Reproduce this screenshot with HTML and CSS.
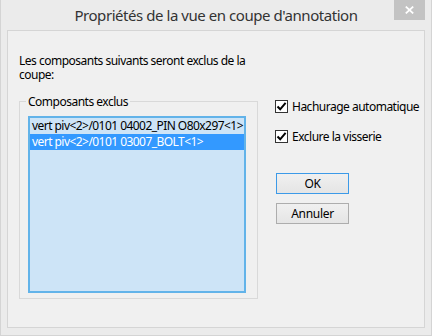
FILE: index.html
```html
<!DOCTYPE html>
<html lang="fr">
<head>
<meta charset="utf-8">
<link rel="stylesheet" href="styles.css">
</head>
<body>
<div class="window">
  <div class="titlebar">
    <div class="title">Propriétés de la vue en coupe d'annotation</div>
    <div class="close">
      <svg width="9" height="8" viewBox="0 0 9 8"><path d="M0.8 0.6 L8.2 7.4 M8.2 0.6 L0.8 7.4" stroke="#fff" stroke-width="1.8"/></svg>
    </div>
  </div>
  <div class="client">
    <p class="intro">Les composants suivants seront exclus de la<br>coupe:</p>
    <div class="main">
      <fieldset class="group">
        <legend>Composants exclus</legend>
        <div class="listbox">
          <div class="item">vert piv&lt;2&gt;/0101 04002_PIN O80x297&lt;1&gt;</div>
          <div class="item selected">vert piv&lt;2&gt;/0101 03007_BOLT&lt;1&gt;</div>
        </div>
      </fieldset>
      <div class="side">
        <label class="check first">
          <span class="box"><svg width="11" height="11" viewBox="0 0 11 11"><path d="M1.5 5.5 L4.2 8.3 L9.6 1.8" fill="none" stroke="#000" stroke-width="2"/></svg></span>
          <span>Hachurage automatique</span>
        </label>
        <label class="check second">
          <span class="box"><svg width="11" height="11" viewBox="0 0 11 11"><path d="M1.5 5.5 L4.2 8.3 L9.6 1.8" fill="none" stroke="#000" stroke-width="2"/></svg></span>
          <span>Exclure la visserie</span>
        </label>
        <button class="btn ok">OK</button>
        <button class="btn cancel">Annuler</button>
      </div>
    </div>
  </div>
</div>
</body>
</html>
```

FILE: styles.css
```css
* { box-sizing: border-box; }
html, body { margin: 0; padding: 0; }
body {
  width: 432px;
  height: 336px;
  font-family: "Noto Sans", "Open Sans", sans-serif;
  font-size: 12px;
  letter-spacing: -0.5px;
  color: #000;
  background: #ebebeb;
}
.window {
  width: 432px;
  height: 336px;
  display: flex;
  flex-direction: column;
  background: #ebebeb;
  border-left: 1px solid #d4d4d4;
  border-right: 1px solid #d4d4d4;
  border-bottom: 1px solid #d4d4d4;
}
.titlebar {
  position: relative;
  height: 30px;
  flex: none;
}
.title {
  text-align: center;
  font-size: 15px;
  line-height: 20px;
  padding-top: 5px;
  color: #333;
  letter-spacing: -0.45px;
}
.close {
  position: absolute;
  top: 0;
  right: 6px;
  width: 31px;
  height: 20px;
  background: #c3c3c3;
  display: flex;
  align-items: center;
  justify-content: center;
}
.client {
  flex: 1;
  margin: 0 6px 7px 6px;
  border: 1px solid #d5d5d5;
  background: #f0f0f0;
  padding: 23px 0 0 11px;
}
.intro {
  margin: 0;
  line-height: 14px;
}
.main {
  display: grid;
  grid-template-columns: 239px auto;
  column-gap: 17px;
  margin-top: 12px;
  align-items: start;
}
.group {
  margin: 0;
  border: 1px solid #d9d9d9;
  padding: 0 11px 5px 6px;
  min-width: 0;
}
.group legend {
  padding: 0 2px;
  line-height: 15px;
  color: #000;
}
.listbox {
  margin: 7px 0 0 2px;
  width: 218px;
  height: 177px;
  border: 2px solid #62b3e9;
  background: #cde4f7;
  white-space: nowrap;
  overflow: hidden;
}
.item {
  height: 16px;
  line-height: 16px;
  padding-left: 2px;
  letter-spacing: -0.55px;
}
.item.selected {
  background: #3399ff;
  color: #fff;
}
.side {
  display: flex;
  flex-direction: column;
  align-items: flex-start;
}
.check {
  display: flex;
  align-items: center;
  height: 13px;
  line-height: 13px;
  gap: 4px;
  white-space: nowrap;
}
.check.first { margin-top: 6px; }
.check.second { margin-top: 17px; }
.box {
  width: 13px;
  height: 13px;
  border: 1px solid #333;
  background: #fff;
  display: flex;
  align-items: center;
  justify-content: center;
}
.btn {
  width: 73px;
  height: 21px;
  margin-left: 1px;
  padding: 0;
  font-family: inherit;
  font-size: 12px;
  letter-spacing: -0.3px;
  color: #000;
  border: 1px solid #adadad;
  background: linear-gradient(#f0f0f0, #e5e5e5);
  line-height: 19px;
}
.btn.ok { margin-top: 30px; border-color: #3c9ae8; }
.btn.cancel { margin-top: 9px; }
```
